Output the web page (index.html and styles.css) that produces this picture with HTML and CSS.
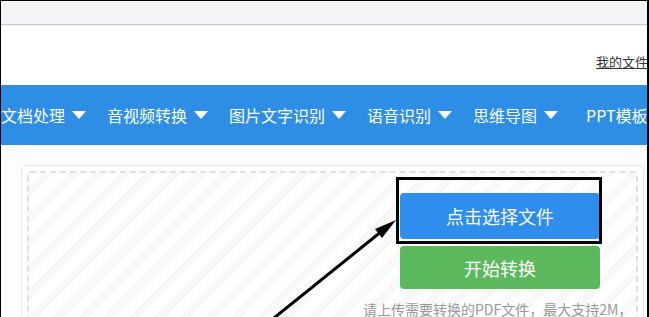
FILE: index.html
```html
<!DOCTYPE html>
<html lang="zh-CN">
<head>
    <meta charset="UTF-8">
    <meta name="viewport" content="width=device-width, initial-scale=1.0">
    <title>PDF转换</title>
    <link rel="stylesheet" href="styles.css">
</head>
<body>
    <div class="frame">
        <div class="topbar"></div>
        <div class="header">
            <a class="myfiles" href="#">我的文件</a>
        </div>
        <nav class="nav">
            <div class="nav-item">文档处理<span class="caret"></span></div>
            <div class="nav-item">音视频转换<span class="caret"></span></div>
            <div class="nav-item">图片文字识别<span class="caret"></span></div>
            <div class="nav-item">语音识别<span class="caret"></span></div>
            <div class="nav-item">思维导图<span class="caret"></span></div>
            <div class="nav-item ppt">PPT模板</div>
        </nav>
        <div class="content">
            <div class="uploader">
                <div class="dropzone">
                    <div class="upload-col">
                        <button class="btn btn-pick">点击选择文件</button>
                        <button class="btn btn-start">开始转换</button>
                        <p class="tip">请上传需要转换的PDF文件，最大支持2M，</p>
                    </div>
                </div>
            </div>
        </div>
    </div>

    <!-- annotation drawn over the screenshot -->
    <div class="mark"></div>
    <svg class="arrow" width="649" height="317" viewBox="0 0 649 317">
        <line x1="274" y1="318" x2="382" y2="231" stroke="#000" stroke-width="3"/>
        <polygon points="396,220 382,238 375,229" fill="#000"/>
    </svg>
</body>
</html>
```

FILE: styles.css
```css
body {
    margin: 0;
    position: relative;
    width: 649px;
    height: 317px;
    overflow: hidden;
    font-family: "Noto Sans CJK SC", "Noto Sans", sans-serif;
    background-color: #fff;
}

.frame {
    box-sizing: border-box;
    width: 649px;
    height: 317px;
    border-top: 1px solid #000;
    border-left: 1px solid #000;
    border-right: 2px solid #000;
    overflow: hidden;
}

.topbar {
    height: 23px;
    background-color: #f4f4f6;
    border-bottom: 1px solid #cacaca;
}

.header {
    box-sizing: border-box;
    height: 60px;
    padding: 22px 0 0 595px;
    border-top: 1px solid #f3f3f3;
    white-space: nowrap;
    overflow: hidden;
}

.myfiles {
    font-size: 13px;
    line-height: 18px;
    color: #333;
    text-decoration: underline;
}

.nav {
    height: 60px;
    display: flex;
    align-items: center;
    gap: 21px;
    background-color: #2e8ee6;
    white-space: nowrap;
    overflow: hidden;
}

.nav-item {
    display: flex;
    align-items: center;
    flex-shrink: 0;
    color: #fff;
    font-size: 16px;
    line-height: 20px;
}

.nav-item.ppt {
    margin-left: 7px;
}

.caret {
    width: 0;
    height: 0;
    margin-left: 7px;
    border-left: 7px solid transparent;
    border-right: 7px solid transparent;
    border-top: 8px solid #fff;
}

.content {
    padding: 20px 0 0 20px;
    background-color: #fdfdfd;
    height: 200px;
}

.uploader {
    margin-right: 3px;
    padding: 5px;
    border: 1px solid #e6e6e6;
    border-radius: 6px;
    background-color: #fff;
    height: 200px;
}

.dropzone {
    height: 100%;
    padding-top: 20px;
    box-sizing: border-box;
    border: 2px dashed #e0e0e0;
    border-radius: 3px;
    background: repeating-linear-gradient(135deg, #fff 0 10px, #f8f8f9 10px 18px);
}

.upload-col {
    width: 274px;
    margin-left: 334px;
    display: flex;
    flex-direction: column;
    align-items: center;
}

.btn {
    width: 200px;
    border: none;
    border-radius: 4px;
    color: #fff;
    font-family: inherit;
    font-size: 18px;
    line-height: 24px;
    cursor: pointer;
}

.btn-pick {
    height: 46px;
    background-color: #2f8ded;
}

.btn-start {
    height: 43px;
    margin-top: 7px;
    background-color: #5cb85c;
}

.tip {
    align-self: flex-start;
    margin: 10px 0 0;
    font-size: 14px;
    line-height: 20px;
    color: #999;
    white-space: nowrap;
}

.mark {
    position: absolute;
    left: 396px;
    top: 177px;
    width: 200px;
    height: 61px;
    border: 3px solid #000;
}

.arrow {
    position: absolute;
    left: 0;
    top: 0;
    pointer-events: none;
}
```
